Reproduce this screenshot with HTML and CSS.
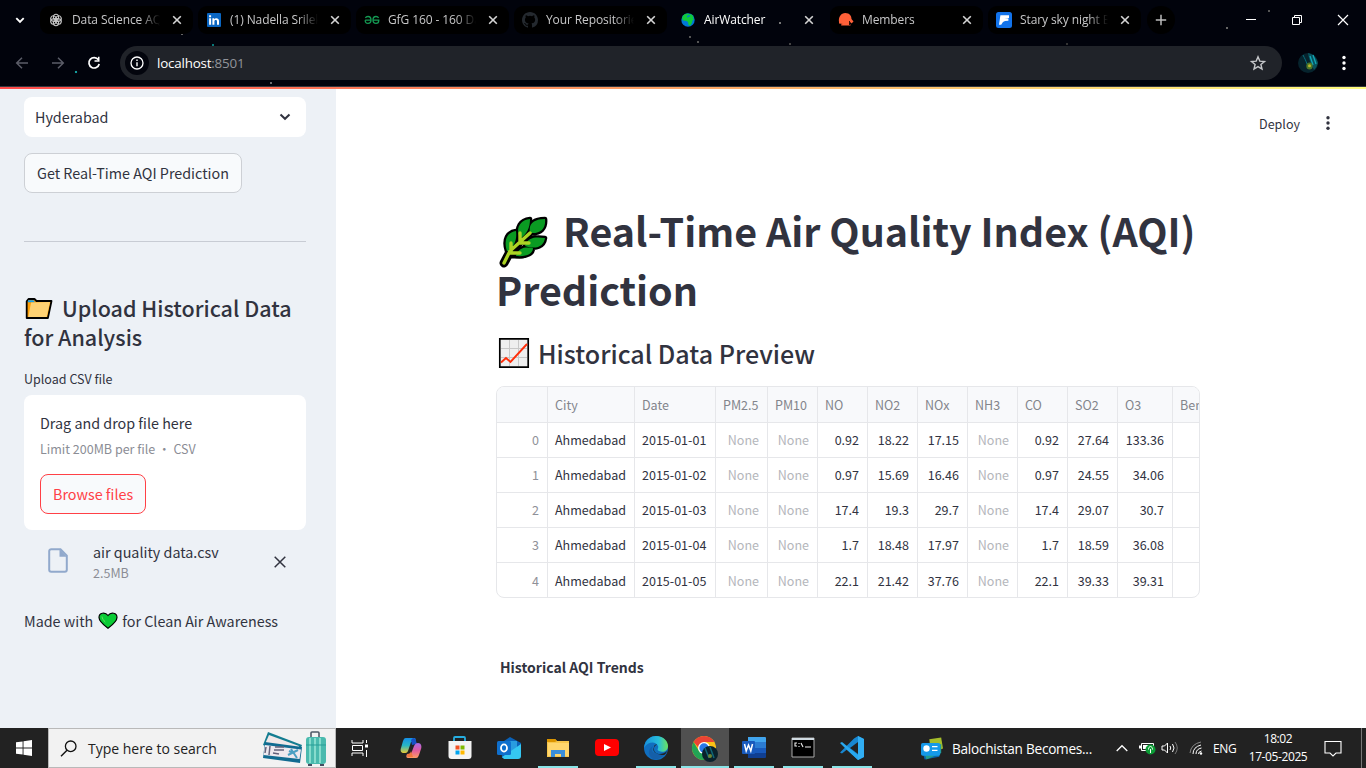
FILE: index.html
```html
<!DOCTYPE html>
<html lang="en">
<head>
<meta charset="utf-8">
<title>AirWatcher</title>
<link rel="stylesheet" href="styles.css">
</head>
<body>
<header class="browser">
  <div class="tabs">
    <svg class="tab-search" viewBox="0 0 12 12"><path d="M2.3 4.2 6 7.9l3.7-3.7" fill="none" stroke="#fff" stroke-width="1.9"/></svg>
    <div class="tab"><svg class="fav" viewBox="0 0 16 16"><g fill="none" stroke="#c4c4c4" stroke-width="1.1"><ellipse cx="8" cy="5.3" rx="2.6" ry="3"/><ellipse cx="8" cy="5.3" rx="2.6" ry="3" transform="rotate(60 8 8)"/><ellipse cx="8" cy="5.3" rx="2.6" ry="3" transform="rotate(120 8 8)"/><ellipse cx="8" cy="5.3" rx="2.6" ry="3" transform="rotate(180 8 8)"/><ellipse cx="8" cy="5.3" rx="2.6" ry="3" transform="rotate(240 8 8)"/><ellipse cx="8" cy="5.3" rx="2.6" ry="3" transform="rotate(300 8 8)"/></g></svg><span class="tab-title">Data Science AQI</span><svg class="x" viewBox="0 0 10 10"><path d="m1.2 1.2 7.6 7.6m0-7.6L1.2 8.8"/></svg></div>
    <div class="tab"><svg class="fav" viewBox="0 0 16 16"><rect x="1" y="1" width="14" height="14" rx="1" fill="#0a66c2"/><path d="M3.1 6.3h2v6.4h-2zM3.1 3.2h2v2h-2zM6.4 6.3h1.9v1c.9-1.6 4.7-1.8 4.7 1.6v3.8h-2V9.4c0-2-2.6-1.8-2.6 0v3.3h-2z" fill="#fff"/></svg><span class="tab-title">(1) Nadella Srilekha</span><svg class="x" viewBox="0 0 10 10"><path d="m1.2 1.2 7.6 7.6m0-7.6L1.2 8.8"/></svg></div>
    <div class="tab"><svg class="fav" viewBox="0 0 16 16"><path d="M7 8.2H1.2M1.4 6C2 4.7 3 4.5 4 4.5c2 0 3 1.5 3 3.5s-1 3.4-3 3.4S1.2 10.2 1.2 8.2M9 8.2h5.8c0 2-1 3.2-2.8 3.2-2 0-3-1.4-3-3.4s1-3.5 3-3.5c1 0 2 .2 2.6 1.5" fill="none" stroke="#149a53" stroke-width="1.3"/></svg><span class="tab-title">GfG 160 - 160 Days</span><svg class="x" viewBox="0 0 10 10"><path d="m1.2 1.2 7.6 7.6m0-7.6L1.2 8.8"/></svg></div>
    <div class="tab"><svg class="fav" viewBox="0 0 16 16"><path fill="#24292f" d="M8 0C3.58 0 0 3.58 0 8c0 3.54 2.29 6.53 5.47 7.59.4.07.55-.17.55-.38v-1.49c-2.01.37-2.53-.49-2.69-.94-.09-.23-.48-.94-.82-1.13-.28-.15-.68-.52-.01-.53.63-.01 1.08.58 1.23.82.72 1.21 1.87.87 2.33.66.07-.52.28-.87.51-1.07-1.78-.2-3.64-.89-3.64-3.95 0-.87.31-1.59.82-2.15-.08-.2-.36-1.02.08-2.12 0 0 .67-.21 2.2.82a7.6 7.6 0 0 1 4 0c1.53-1.04 2.2-.82 2.2-.82.44 1.1.16 1.92.08 2.12.51.56.82 1.27.82 2.15 0 3.07-1.87 3.75-3.65 3.95.29.25.54.73.54 1.48v2.2c0 .21.15.46.55.38A8 8 0 0 0 16 8c0-4.42-3.58-8-8-8z"/></svg><span class="tab-title">Your Repositories</span><svg class="x" viewBox="0 0 10 10"><path d="m1.2 1.2 7.6 7.6m0-7.6L1.2 8.8"/></svg></div>
    <div class="tab active"><svg class="fav" viewBox="0 0 16 16"><circle cx="8" cy="8" r="6.7" fill="#0078d7"/><path d="M2.5 4.5c1-1.8 3-3 5-3l2 .6 2.7.6 1.5 2.8-.8.5 1.2 1.8-1.5.4-.8 3-1.7 2.5-1.7-.6-.3-2.8L6.6 9 3 8.5 2 6.6z" fill="#10ca3b"/><path d="m7 3.7 2.5-.8.6 1.4-1.8.6-.7 1.2z" fill="#0078d7"/></svg><span class="tab-title">AirWatcher</span><svg class="x" viewBox="0 0 10 10"><path d="m1.2 1.2 7.6 7.6m0-7.6L1.2 8.8"/></svg></div>
    <div class="tab"><svg class="fav" viewBox="0 0 16 16"><path d="M1 10C.2 5 3 1 7.3 1S13.5 4 13.5 7l2 2.5-2 2-1-1.5-1 2 1 .6v1H3.2v-1.3L5 12l-4-.4z" fill="#ff6038"/><path d="M11.5 9v4" stroke="#000" stroke-width=".8"/></svg><span class="tab-title">Members</span><svg class="x" viewBox="0 0 10 10"><path d="m1.2 1.2 7.6 7.6m0-7.6L1.2 8.8"/></svg></div>
    <div class="tab"><svg class="fav" viewBox="0 0 16 16"><rect width="16" height="16" rx="2.5" fill="#1273eb"/><path d="M4.4 3.2H13v2.9l-4.4.5h3.8v2.2L9 9l-2 1-1.8 2.8H3z" fill="#fff"/></svg><span class="tab-title">Stary sky night Ba</span><svg class="x" viewBox="0 0 10 10"><path d="m1.2 1.2 7.6 7.6m0-7.6L1.2 8.8"/></svg></div>
    <div class="new-tab"><svg viewBox="0 0 12 12"><path d="M6 .8v10.4M.8 6h10.4" stroke="#bbb" stroke-width="1.5"/></svg></div>
    <div class="window-buttons">
      <svg viewBox="0 0 12 12"><path d="M1 5.5h10" stroke="#fff"/></svg>
      <svg viewBox="0 0 12 12"><path d="M1.5 3.5h7v7h-7zM3.5 3.5v-2h7v7h-2" fill="none" stroke="#fff"/></svg>
      <svg viewBox="0 0 12 12"><path d="m1 1 10 10M11 1 1 11" stroke="#fff" stroke-width="1.2"/></svg>
    </div>
  </div>
  <div class="toolbar">
    <svg class="nav" viewBox="0 0 16 16"><path d="M14 8H3m5-5.3L2.7 8 8 13.3" fill="none" stroke="#5b5d68" stroke-width="1.5"/></svg>
    <svg class="nav" viewBox="0 0 16 16"><path d="M2 8h11M8 2.7 13.3 8 8 13.3" fill="none" stroke="#5b5d68" stroke-width="1.5"/></svg>
    <svg class="nav" viewBox="0 0 16 16"><path d="M12.4 4.8A5.2 5.2 0 1 0 13.2 9" fill="none" stroke="#fff" stroke-width="1.7"/><path d="M13.5 1.8v5h-5V5.3H12V1.8z" fill="#fff"/></svg>
    <div class="omnibox">
      <div class="site-info"><svg viewBox="0 0 14 14"><circle cx="7" cy="7" r="6" fill="none" stroke="#fff" stroke-width="1.3"/><path d="M7 6.2v4M7 3.5v1.4" stroke="#fff" stroke-width="1.4"/></svg></div>
      <span class="url">localhost<span class="port">:8501</span></span>
      <svg class="star" viewBox="0 0 16 16"><path d="m8 1.8 1.8 4.3 4.7.4-3.6 3 1.1 4.6L8 11.6l-4 2.5 1.1-4.6-3.6-3 4.7-.4z" fill="none" stroke="#c5c7ca" stroke-width="1.4"/></svg>
    </div>
    <svg class="avatar" viewBox="0 0 20 20"><circle cx="10" cy="10" r="10" fill="#06232d"/><path d="M10 0c5 1 9 5 10 10-1 3-2 5-4 7-2-5-5-9-6-17z" fill="#08515c"/><path d="m12 3 3 9m0-10 3 9" stroke="#13a6b5" stroke-width="1.3"/><path d="M5 2c2 4 3 6 4 9" stroke="#077080"/><ellipse cx="11.5" cy="13" rx="3.2" ry="3.6" fill="#4a762a"/><circle cx="11.5" cy="12.7" r="1.5" fill="#bab52c"/></svg>
    <svg class="menu" viewBox="0 0 6 16"><g fill="#fff"><circle cx="3" cy="2.5" r="1.7"/><circle cx="3" cy="8" r="1.7"/><circle cx="3" cy="13.5" r="1.7"/></g></svg>
  </div>
</header>
<div class="decoration"></div>
<div class="app">
  <aside class="sidebar">
    <div class="select"><span>Hyderabad</span><svg viewBox="0 0 12 12"><path d="m1.5 3.5 4.5 4.3 4.5-4.3" fill="none" stroke="#31333f" stroke-width="2"/></svg></div>
    <button class="button predict">Get Real-Time AQI Prediction</button>
    <div class="divider"></div>
    <h2 class="upload-title"><svg class="folder" viewBox="0 0 28 22"><path d="M1.7 20V3.2L3.5 1h6l2 2H26.5l-3.6 17z" fill="#ff9f05" stroke="#000" stroke-width="1.8" stroke-linejoin="round"/><path d="M3 2.2h5.4l1.6 2H3z" fill="#1ba1e8"/><path d="m6 4.5 19-.4-3.3 15H3.3z" fill="#ffd273"/></svg><span>Upload Historical Data</span><br><span class="analysis">for Analysis</span></h2>
    <div class="upload-label">Upload CSV file</div>
    <div class="dropzone">
      <div class="drop-text">Drag and drop file here</div>
      <div class="limit">Limit 200MB per file • CSV</div>
      <button class="button browse">Browse files</button>
    </div>
    <div class="file">
      <svg class="file-icon" viewBox="0 0 20 25"><path d="M3.2 1.2h9.3l6.3 6.4v14.2a2 2 0 0 1-2 2H3.2a2 2 0 0 1-2-2V3.2a2 2 0 0 1 2-2z" fill="none" stroke="#91a9cc" stroke-width="2"/><path d="M11.5 1v7.7H19z" fill="#91a9cc"/></svg>
      <div class="file-info"><div class="file-name">air quality data.csv</div><div class="file-size">2.5MB</div></div>
      <svg class="remove" viewBox="0 0 12 12"><path d="m.7.7 10.6 10.6m0-10.6L.7 11.3" stroke="#31333f" stroke-width="1.5"/></svg>
    </div>
    <div class="made"><span>Made with</span><svg viewBox="0 0 20 18"><path d="M10 16.3C5 12.5 1 9 1 5.5 1 .7 7-.3 10 3.5 13-.3 19 .7 19 5.5c0 3.5-4 7-9 10.800z" fill="#0acb35" stroke="#000" stroke-width="1.2"/><path d="M4 4.5c.2 2 1.5 4 3.3 5.500" fill="none" stroke="#66df62" stroke-width="1"/></svg><span>for Clean Air Awareness</span></div>
  </aside>
  <main class="main">
    <div class="app-toolbar"><span>Deploy</span><svg viewBox="0 0 6 16"><g fill="#31333f"><circle cx="3" cy="2.700" r="1.700"/><circle cx="3" cy="8" r="1.700"/><circle cx="3" cy="13.300" r="1.700"/></g></svg></div>
    <section class="content">
      <h1 class="title"><svg class="leaf" viewBox="0 0 50 52"><path d="m5 47 8-15M13 34l18-19M13 38h10M17 30V18M24 23 25 11M24 24h12" stroke="#000" stroke-width="9" stroke-linecap="round" fill="none"/><g fill="#0a9b22" stroke="#000" stroke-width="4.600" stroke-linejoin="round" paint-order="stroke"><path d="M31 17C29 7 36 3 46 3c1 9-4 15-15 14zM20 20c-3-8 1-16 11-17 0 9-3 15-10 20zM8 35C4 23 9 16 17 15c1 8-1 14-7 20zM26 30c3-9 10-9 20-8-1 8-8 12-20 8zM17 40c3-9 9-9 17-8 0 5-5 9-17 8z"/></g><path d="m5 47 6-12 20-18M12 36V27M12 37h9M21 27h9M21 25V17" stroke="#acd424" stroke-width="3.400" fill="none" stroke-linecap="round"/></svg><span>Real-Time Air Quality Index (AQI)</span><br><span class="prediction">Prediction</span></h1>
      <h2 class="preview"><svg viewBox="0 0 30 30"><path d="M.8.8h28.400v28.400H.8z" fill="#efefef" stroke="#000" stroke-width="1.700"/><path d="M10.500 2v26M19.500 2v26M2 10.500h26M2 19.500h26" stroke="#c8c8c8"/><path d="m2 24.500 5-4.500 4.500 4L28 6" fill="none" stroke="#ff2e0a" stroke-width="1.900"/></svg><span>Historical Data Preview</span></h2>
      <div class="table-frame">
        <table class="data">
          <colgroup><col class="w50"><col class="w87"><col class="w81"><col class="w52"><col class="w50"><col class="w50"><col class="w50"><col class="w50"><col class="w50"><col class="w50"><col class="w50"><col class="w55"><col class="w50"></colgroup>
          <thead><tr><th></th><th>City</th><th>Date</th><th>PM2.5</th><th>PM10</th><th>NO</th><th>NO2</th><th>NOx</th><th>NH3</th><th>CO</th><th>SO2</th><th>O3</th><th>Benzene</th></tr></thead>
          <tbody>
          <tr><td class="dim">0</td><td class="text">Ahmedabad</td><td class="text">2015-01-01</td><td class="none">None</td><td class="none">None</td><td>0.92</td><td>18.22</td><td>17.15</td><td class="none">None</td><td>0.92</td><td>27.64</td><td>133.36</td><td></td></tr>
          <tr><td class="dim">1</td><td class="text">Ahmedabad</td><td class="text">2015-01-02</td><td class="none">None</td><td class="none">None</td><td>0.97</td><td>15.69</td><td>16.46</td><td class="none">None</td><td>0.97</td><td>24.55</td><td>34.06</td><td></td></tr>
          <tr><td class="dim">2</td><td class="text">Ahmedabad</td><td class="text">2015-01-03</td><td class="none">None</td><td class="none">None</td><td>17.4</td><td>19.3</td><td>29.7</td><td class="none">None</td><td>17.4</td><td>29.07</td><td>30.7</td><td></td></tr>
          <tr><td class="dim">3</td><td class="text">Ahmedabad</td><td class="text">2015-01-04</td><td class="none">None</td><td class="none">None</td><td>1.7</td><td>18.48</td><td>17.97</td><td class="none">None</td><td>1.7</td><td>18.59</td><td>36.08</td><td></td></tr>
          <tr><td class="dim">4</td><td class="text">Ahmedabad</td><td class="text">2015-01-05</td><td class="none">None</td><td class="none">None</td><td>22.1</td><td>21.42</td><td>37.76</td><td class="none">None</td><td>22.1</td><td>39.33</td><td>39.31</td><td></td></tr>
          </tbody>
        </table>
      </div>
      <div class="chart-title">Historical AQI Trends</div>
    </section>
  </main>
</div>
<footer class="taskbar">
  <div class="start"><svg viewBox="0 0 16 16"><path d="M0 2.300 6.600 1.400v6H0zM7.500 1.300 16 0v7.400H7.500zM0 8.400h6.600v6.200L0 13.700zM7.500 8.400H16V16l-8.500-1.200z" fill="#fff"/></svg></div>
  <div class="search"><svg class="lens" viewBox="0 0 17 17"><circle cx="10.700" cy="6.300" r="5.300" fill="none" stroke="#111" stroke-width="1.300"/><path d="m7 10.200-6 6" stroke="#111" stroke-width="1.400"/></svg><span>Type here to search</span>
    <svg class="travel" viewBox="0 0 64 36"><path d="m6 2 34 13-5 13L1 15z" fill="#147d91"/><path d="m7 5 30 11-3 9L3 14z" fill="#f1e8e8"/><path d="m3 12 37 5-2 16-37-5z" fill="#116b91"/><path d="m3 15 36 4.500-1.500 9.500-36-4z" fill="#eee8ee"/><path d="m8 16-1 9M13 17h9M12 20h10M11 23l6 1M4 17l-1 6" stroke="#64627b" stroke-width="1.500"/><path d="m26 25 10-5M29 19l6 9M27 21l4 2" stroke="#4b9fc3" stroke-width="2"/><path d="M49 8V3q0-1 1-1h6q1 0 1 1v5" fill="none" stroke="#4e5967" stroke-width="1.600"/><rect x="44" y="7" width="20" height="27" rx="3" fill="#4abaae"/><path d="M48 8v25M53 8v25M58 8v25" stroke="#87dccd" stroke-width="2"/><path d="M44 15h20" stroke="#279d97"/><path d="M46 34h4v2h-4zM58 34h4v2h-4z" fill="#454d61"/></svg>
  </div>
  <nav class="apps">
    <div class="task shift"><svg viewBox="0 0 24 24"><path d="M4 4v3h11V4M4 20v-3h11v3M4.500 9.500h10v5h-10zM18.500 4v3M18.500 14v7" fill="none" stroke="#fff"/><path d="M17 8.500h3v3h-3z" fill="#fff"/></svg></div>
    <div class="task"><svg viewBox="0 0 24 24"><defs><linearGradient id="copA" x2="0" y2="1"><stop stop-color="#1590e8"/><stop offset=".5" stop-color="#28b7c4"/><stop offset="1" stop-color="#e7cb35"/></linearGradient><linearGradient id="copB" x2="0" y2="1"><stop stop-color="#a86be8"/><stop offset=".5" stop-color="#e25c9d"/><stop offset="1" stop-color="#ff9b62"/></linearGradient></defs><path d="M7 2h8c2 0 2 2 1 4h-4l-3 9c-1 2-2 2-4 2-3 0-4-2-3-5l2-7c1-2 1-3 3-3z" fill="url(#copA)"/><path d="M14 2c2 0 3 1 3 3l1 3-5 1-1-5z" fill="#1751c5"/><path d="M17 22H9c-2 0-2-2-1-4h4l3-8c1-2 2-3 4-3 3 0 4 3 3 6l-2 6c-1 2-1 3-3 3z" fill="url(#copB)"/><path d="M8 18c2 0 4-1 4-3l2 6H9c-1 0-1-1-1-3z" fill="#f1773e"/></svg></div>
    <div class="task"><svg viewBox="0 0 24 24"><path d="M6 6V2q0-1 1-1h9q1 0 1 1v4" fill="none" stroke="#26aee1" stroke-width="1.800"/><path d="M.5 5h23v15q0 3-3 3h-17q-3 0-3-3z" fill="#f3f3f3"/><path d="M7.500 9.500h4v4h-4z" fill="#f25022"/><path d="M12.500 9.500h4v4h-4z" fill="#7fba00"/><path d="M7.500 14.500h4v4h-4z" fill="#00a4ef"/><path d="M12.500 14.500h4v4h-4z" fill="#ffb900"/></svg></div>
    <div class="task"><svg viewBox="0 0 24 24"><path d="m4 7 9-6 11 6v12q0 3-3 3H5z" fill="#0a61b7"/><path d="M7 5h13v12H7z" fill="#299cdf"/><path d="m5 21 19-13v12q0 3-3 3H7z" fill="#35c7f2"/><rect y="5" width="14" height="14" rx="1.500" fill="#0f6fcd"/><ellipse cx="7" cy="12" rx="3" ry="3.600" fill="none" stroke="#fff" stroke-width="1.800"/></svg></div>
    <div class="task open"><svg viewBox="0 0 24 24"><path d="M1 3h8l2 2h12v16H1z" fill="#f7c64c"/><path d="M1 3h8l2 2-2 1H1z" fill="#dc9500"/><path d="M2 7h21v13H2z" fill="#ffd66d"/><path d="M5 21v-7h14v7h-4v-3H9v3z" fill="#3b8fda"/></svg></div>
    <div class="task"><svg viewBox="0 0 24 24"><rect y="3" width="24" height="17" rx="4" fill="#f00"/><path d="m9 8 7 3.500L9 15z" fill="#fff"/></svg></div>
    <div class="task open"><svg viewBox="0 0 24 24"><defs><linearGradient id="edgeA"><stop stop-color="#178fdc"/><stop offset=".6" stop-color="#27bddb"/><stop offset="1" stop-color="#6ce35c"/></linearGradient></defs><circle cx="12" cy="12" r="12" fill="#106ebf"/><path d="M0 12C1 3 7 0 12 0c8 0 12 6 12 10 0 5-5 7-9 5-3-1 0-3-1-5C12 5 4 5 0 12z" fill="url(#edgeA)"/><path d="M9 10c-4 5 2 10 10 7 2-1 4-2 2 1-3 4-8 6-12 5-6-4-5-10 0-13z" fill="#155fa9"/><path d="M13 9c-4 0-5 9 3 9 3 0 5-1 7-3 0 1-2 4-3 4-5 0-13-2-10-8 0-2 2-3 3-2z" fill="#222"/></svg></div>
    <div class="task open current"><svg class="chrome-icon" viewBox="0 0 26 26"><circle cx="12" cy="12" r="12" fill="#fbc116"/><path d="M1.600 6A12 12 0 0 1 22.400 6H12v12z" fill="#ea4335"/><path d="M1.600 6 7 15l7 3-2 6A12 12 0 0 1 1.600 6z" fill="#22a455"/><circle cx="12" cy="12" r="6" fill="#fff"/><circle cx="12" cy="12" r="4.700" fill="#2878e8"/><circle cx="18" cy="18" r="8" fill="#09212c"/><path d="m13 12 4 10m1-11 4 11" stroke="#0f6676" stroke-width="1.500"/><circle cx="18" cy="20" r="2" fill="#6b8533"/></svg></div>
    <div class="task open"><svg viewBox="0 0 24 24"><path d="M6 1h17q1 0 1 1v5H6z" fill="#41a5ee"/><path d="M6 6h18v6H6z" fill="#2b7cd3"/><path d="M6 12h18v5H6z" fill="#185abd"/><path d="M6 17h18v4q0 1-1 1H6z" fill="#103f91"/><rect y="5" width="13" height="13" rx="1" fill="#185abd"/><path d="m2.500 8 1.700 7L6.500 9l2.300 6L10.500 8" fill="none" stroke="#fff" stroke-width="1.500"/></svg></div>
    <div class="task open"><svg viewBox="0 0 24 24"><path d="M1 2h22v19H1z" fill="#000" stroke="#aaa"/><path d="M1 2h22v2H1z" fill="#d0dbe2"/><path d="M6 7H4v3h2M8 7v1M8 10v1m2-4 2 4m2 0h6" stroke="#eee" fill="none" stroke-width="1.100"/></svg></div>
    <div class="task open"><svg viewBox="0 0 24 24"><path d="m18 0 6 3v18l-6 3L7 13.500l-5 4L0 16.500l14-14z" fill="#1887d1"/><path d="m0 7 2-1 16 13v5L7 14z" fill="#28a8ef"/><path d="M18 6v12l-8-6z" fill="#222"/><path d="M18 0v24l6-3V3z" fill="#31aef3"/></svg></div>
  </nav>
  <div class="news"><svg viewBox="0 0 24 24"><path d="m9 2 13-2 2 12-13 5z" fill="#a5bd2b"/><path d="m1 14 20-7-1 14-16 3z" fill="#0765af"/><path d="M3 15 22 7v10L6 24z" fill="#239d8b"/><rect x="0" y="6" width="21" height="14" rx="2" fill="#1599e9"/><circle cx="6" cy="12" r="3.500" fill="#fff"/><path d="M12 10h6M12 14h6" stroke="#fff" stroke-width="1.500"/></svg><span>Balochistan Becomes...</span></div>
  <div class="tray">
    <svg class="chev" viewBox="0 0 12 8"><path d="m.7 7 5.300-5.300L11.300 7" fill="none" stroke="#fff" stroke-width="1.300"/></svg>
    <svg class="battery" viewBox="0 0 17 14"><path d="M2.500 2.500h12v7h-12z" fill="none" stroke="#fff"/><path d="M0 4.500h2v3H0zM4 4h6v4H4z" fill="#fff"/><circle cx="11.500" cy="8.500" r="5" fill="#0b9c35"/><path d="M11.500 12V8M9.500 8.500c0-4 4-4 4 0" stroke="#fff" fill="none"/></svg>
    <svg class="speaker" viewBox="0 0 18 14"><path d="M1 5h2.500L6.500 2v10l-3-3H1zM9 5q1.500 2 0 4M11.500 3q3 4 0 8" fill="none" stroke="#fff"/><path d="M14 1q4.500 6 0 12" fill="none" stroke="#777"/></svg>
    <svg class="wifi" viewBox="0 0 14 14"><path d="M1 12Q2 3 12 1" fill="none" stroke="#888"/><path d="M4 13Q4 6 12 4M7 13Q7 8 12.500 7M9.500 13q0-2.500 3-3" fill="none" stroke="#fff"/><circle cx="12" cy="12.500" r="1.200" fill="#fff"/></svg>
    <span class="lang">ENG</span>
    <div class="clock"><span>18:02</span><span>17-05-2025</span></div>
    <svg class="notify" viewBox="0 0 18 17"><path d="M1 1.500h16v11.500h-5l-3 3-3-3H1z" fill="none" stroke="#fff" stroke-width="1.100"/></svg>
    <div class="peek"></div>
  </div>
</footer>
</body>
</html>
```
FILE: styles.css
```css
* { box-sizing: border-box; }
body { margin: 0; width: 1366px; height: 768px; overflow: hidden; display: flex; flex-direction: column; background: #fff; color: #31333f; font-family: "Noto Sans CJK SC", "Noto Sans", sans-serif; }
svg { display: block; flex: none; overflow: visible; }
h1, h2 { margin: 0; }
span { white-space: nowrap; }

/* Browser frame */
.browser { height: 87px; flex: none; color: #c7c7c8; font-family: "Open Sans", sans-serif; border-bottom: 1px solid #33363e; background:
  radial-gradient(circle at 76px 72px, #159b9c 1px, transparent 1.6px),
  radial-gradient(circle at 213px 45px, #087778 .8px, transparent 1.4px),
  radial-gradient(circle at 182px 34px, #666 .8px, transparent 1.4px),
  radial-gradient(circle at 271px 83px, #6a6b70 .9px, transparent 1.5px),
  radial-gradient(circle at 780px 23px, #777 .8px, transparent 1.4px),
  radial-gradient(circle at 690px 37px, #555 .8px, transparent 1.4px),
  radial-gradient(circle at 698px 42px, #555 .8px, transparent 1.4px),
  radial-gradient(circle at 790px 44px, #444 .8px, transparent 1.4px),
  radial-gradient(circle at 1227px 28px, #666 .8px, transparent 1.4px),
  radial-gradient(circle at 1269px 11px, #555 .8px, transparent 1.4px),
  radial-gradient(circle at 1067px 44px, #333 .8px, transparent 1.4px),
  #01030c; }
.tabs { display: flex; align-items: center; height: 40px; padding-left: 14px; }
.tab-search { width: 12px; height: 12px; margin-right: 14px; }
.tab { width: 153px; height: 28px; margin-right: 5px; padding: 0 11px 0 8px; border-radius: 9px; background: #000; display: flex; align-items: center; }
.tab.active { background: none; color: #fff; }
.fav { width: 16px; height: 16px; margin-right: 8px; }
.tab-title { width: 88px; overflow: hidden; font-size: 12px; letter-spacing: -.1px; line-height: 20px; -webkit-mask-image: linear-gradient(90deg, #000 68px, transparent 88px); mask-image: linear-gradient(90deg, #000 68px, transparent 88px); }
.x { width: 10px; height: 10px; margin-left: auto; fill: none; stroke: #d5d5d5; stroke-width: 1.6; }
.new-tab { width: 28px; height: 28px; margin-left: 1px; border-radius: 50%; background: #000; display: grid; place-items: center; }
.new-tab svg { width: 12px; height: 12px; }
.window-buttons { display: flex; gap: 34px; margin-left: auto; margin-right: 17px; }
.window-buttons svg { width: 12px; height: 12px; }
.toolbar { display: flex; align-items: center; height: 46px; padding-left: 14px; }
.nav { width: 16px; height: 16px; margin-right: 20px; }
.nav:nth-child(3) { margin-right: 18px; }
.omnibox { width: 1162px; height: 34px; border-radius: 17px; background: #202329; display: flex; align-items: center; padding: 0 16px 0 5px; }
.site-info { width: 24px; height: 24px; border-radius: 50%; background: #03050d; display: grid; place-items: center; }
.site-info svg { width: 14px; height: 14px; }
.url { margin-left: 8px; color: #fff; font-size: 13.4px; letter-spacing: -.2px; }
.port { color: #91949a; }
.star { width: 16px; height: 16px; margin-left: auto; }
.avatar { width: 20px; height: 20px; margin-left: 16px; }
.menu { width: 6px; height: 16px; margin-left: 23px; }
.decoration { height: 2px; flex: none; background: linear-gradient(90deg, #ff4b4b, #fffd80); }

/* Application */
.app { height: 639px; flex: none; display: flex; overflow: hidden; }
.sidebar { width: 336px; flex: none; padding: 8px 30px 0 24px; background: #edf1f6; font-size: 14.33px; line-height: 24px; }
.select { height: 40px; padding: 0 15px 0 11px; background: #fff; border-radius: 8px; display: flex; align-items: center; justify-content: space-between; }
.select svg { width: 12px; height: 12px; }
.button { display: block; height: 40px; padding: 0 12px; border: 1px solid #cdd0d5; border-radius: 8px; background: #f8fafc; color: #31333f; font: 14.33px/24px "Noto Sans CJK SC", sans-serif; white-space: nowrap; }
.predict { margin-top: 16px; width: 218px; }
.divider { height: 1px; margin-top: 48px; background: #c8ccd4; }
.upload-title { margin-top: 51px; font-size: 21.5px; line-height: 29px; font-weight: 500; height: 58px; }
.folder { display: inline-block; width: 28px; height: 22px; margin: 0 9px 0 1px; vertical-align: -3px; }
.upload-label { margin-top: 18px; font-size: 12.54px; line-height: 20px; }
.dropzone { height: 135px; margin-top: 6px; padding: 16px; background: #fff; border-radius: 8px; }
.drop-text { height: 26px; }
.limit { font-size: 12.54px; line-height: 24px; color: #8b8d95; }
.browse { width: 106px; margin-top: 13px; border-color: #ff4046; color: #ff4046; }
.file { display: flex; height: 61px; align-items: center; padding: 0 20px 0 24px; }
.file-icon { width: 20px; height: 25px; }
.file-info { margin-left: 25px; padding-top: 3px; }
.file-name { line-height: 22px; height: 22px; }
.file-size { font-size: 12.54px; line-height: 20px; color: #8b8d95; }
.remove { width: 12px; height: 12px; margin-left: auto; margin-top: 3px; }
.made { display: flex; align-items: center; margin-top: 18px; height: 24px; }
.made svg { width: 20px; height: 18px; margin: 0 4px 0 5px; }
.main { flex: 1; min-width: 0; background: #fff; }
.app-toolbar { height: 68px; padding-right: 35px; display: flex; justify-content: flex-end; align-items: center; font-size: 12.54px; }
.app-toolbar svg { width: 6px; height: 16px; margin-left: 25px; }
.content { width: 704px; margin-left: 160px; padding-top: 46px; }
.title { font-size: 39.4px; line-height: 53px; height: 106px; font-weight: 700; }
.leaf { display: inline-block; width: 50px; height: 52px; margin: 0 14px 0 3px; vertical-align: -15px; height: 52px; margin-top: -12px; margin-bottom: -6px; }
.preview { display: flex; align-items: center; height: 34px; margin-top: 27px; padding-left: 3px; font-size: 25.07px; line-height: 34px; font-weight: 500; }
.preview svg { width: 30px; height: 30px; margin-right: 9px; }
.table-frame { width: 704px; height: 212px; margin-top: 16px; border: 1px solid #e6e7ea; border-radius: 8px; overflow: hidden; }
.data { width: 725px; table-layout: fixed; border-collapse: separate; border-spacing: 0; font-size: 12.54px; line-height: 20px; }
.w50 { width: 50px; } .w52 { width: 52px; } .w55 { width: 55px; } .w81 { width: 81px; } .w87 { width: 87px; }
.data col:first-child { width: 51px; }
.data th { height: 36px; padding: 1px 0 0 7px; text-align: left; background: #f8f9fb; color: #83858c; font-weight: 400; }
.data td { height: 35px; padding: 0 8px 0 0; text-align: right; }
.data th, .data td { border-right: 1px solid #e6e7ea; border-bottom: 1px solid #e6e7ea; white-space: nowrap; }
.data tr:last-child td { border-bottom: 0; }
.data .text { text-align: left; padding: 0 0 0 7px; }
.data .dim { color: #8f9198; }
.data .none { color: #b4b6bb; }
.chart-title { margin: 58px 0 0 4px; font-size: 14px; line-height: 22px; font-weight: 700; }

/* Taskbar */
.taskbar { height: 40px; flex: none; display: flex; background: #222; color: #fff; font-family: "Open Sans", sans-serif; font-size: 14px; }
.start { width: 48px; display: grid; place-items: center; }
.start svg { width: 16px; height: 16px; }
.search { width: 288px; height: 40px; padding-left: 11px; display: flex; align-items: center; border: 1px solid #b9b9b9; background: #f2f2f2; color: #222; }
.lens { width: 17px; height: 17px; margin-right: 11px; }
.travel { width: 64px; height: 36px; margin-left: auto; margin-right: 9px; }
.apps { display: flex; gap: 1px; margin-left: 2px; }
.task { width: 48px; height: 40px; padding-top: 8px; }
.task svg { width: 24px; height: 24px; margin: 0 auto; }
.task.shift { padding-right: 4px; }
.task.open { background: linear-gradient(#8ae4e7, #8ae4e7) center bottom / 40px 2px no-repeat; }
.task.current { background: linear-gradient(#8ae4e7, #8ae4e7) center bottom / 48px 2px no-repeat, #505050; }
.task .chrome-icon { width: 26px; height: 26px; }
.news { display: flex; align-items: center; margin-left: 45px; }
.news svg { width: 22px; height: 23px; margin-right: 9px; }
.news span { font-size: 13.6px; letter-spacing: -.25px; width: 145px; }
.tray { display: flex; align-items: center; margin-left: auto; font-size: 12px; }
.chev { width: 12px; height: 8px; }
.battery { width: 17px; height: 14px; margin-left: 11px; }
.speaker { width: 18px; height: 14px; margin-left: 5px; }
.wifi { width: 14px; height: 14px; margin-left: 10px; }
.lang { width: 24px; margin-left: 10px; letter-spacing: -.4px; }
.clock { width: 70px; display: flex; flex-direction: column; align-items: center; line-height: 18px; margin-left: 6px; letter-spacing: -.4px; }
.notify { width: 18px; height: 17px; margin-left: 11px; }
.peek { width: 1px; height: 40px; margin: 0 4px 0 19px; background: #777; }
```
